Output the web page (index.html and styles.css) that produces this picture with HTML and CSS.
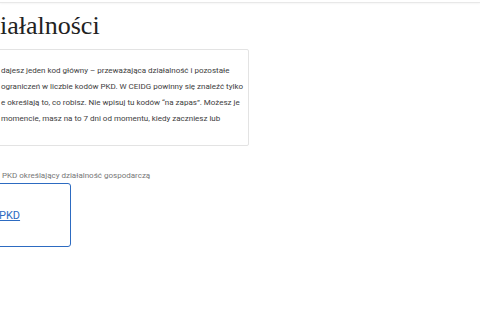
FILE: index.html
```html
<!DOCTYPE html>
<html lang="pl">
<head>
    <meta charset="UTF-8">
    <meta name="viewport" content="width=device-width, initial-scale=1.0">
    <title>Rodzaj działalności</title>
    <link rel="stylesheet" href="styles.css">
</head>
<body>

    <!-- pasek u góry -->
    <div class="topBar"></div>

    <div class="wrap">

        <h1 class="pageTitle">iałalności</h1>

        <!-- informacja o kodach -->
        <div class="infoBox">
            <p class="infoText">
                <span>dajesz jeden kod główny – przeważająca działalność i pozostałe</span>
                <span>ograniczeń w liczbie kodów PKD. W CEIDG powinny się znaleźć tylko</span>
                <span>e określają to, co robisz. Nie wpisuj tu kodów “na zapas”. Możesz je</span>
                <span>momencie, masz na to 7 dni od momentu, kiedy zaczniesz lub</span>
            </p>
        </div>

        <!-- wybór PKD -->
        <div class="pkdField">
            <label class="pkdLabel">PKD określający działalność gospodarczą</label>
            <div class="pkdBox">
                <a href="#" class="pkdLink">PKD</a>
            </div>
        </div>

    </div>

</body>
</html>
```

FILE: styles.css
```css
body{
    margin: 0;
    background: #fff;
    font-family: Roboto, "Liberation Sans", sans-serif;
    color: #333;
    overflow: hidden;
}

.topBar{
    height: 2px;
    border-bottom: 1px solid #e8e8e8;
    box-shadow: 0 1px 2px rgba(0,0,0,0.04);
}

.wrap{
    margin-left: -20px;
}

.pageTitle{
    margin: 0;
    padding: 8px 0 0 20px;
    font-family: "Liberation Serif", serif;
    font-weight: normal;
    font-size: 26px;
    line-height: 30px;
    color: #222;
}

.infoBox{
    width: 269px;
    margin-top: 8px;
    box-sizing: border-box;
    border: 1px solid #e3e3e3;
    border-radius: 2px;
    padding: 13px 0 18px 20px;
}

.infoText{
    margin: 0;
    font-size: 8px;
    line-height: 16px;
    color: #3d3d3d;
}

.infoText span{
    display: block;
    white-space: nowrap;
}

.pkdField{
    margin-top: 24px;
}

.pkdLabel{
    display: block;
    padding-left: 22px;
    font-size: 8px;
    line-height: 12px;
    color: #777;
}

.pkdBox{
    width: 91px;
    height: 64px;
    margin-top: 1px;
    box-sizing: border-box;
    border: 1px solid #2d6bc1;
    border-radius: 3px;
    display: flex;
    align-items: center;
    padding-left: 18px;
}

.pkdLink{
    font-size: 11px;
    color: #2d6bc1;
    text-decoration: underline;
}
```
